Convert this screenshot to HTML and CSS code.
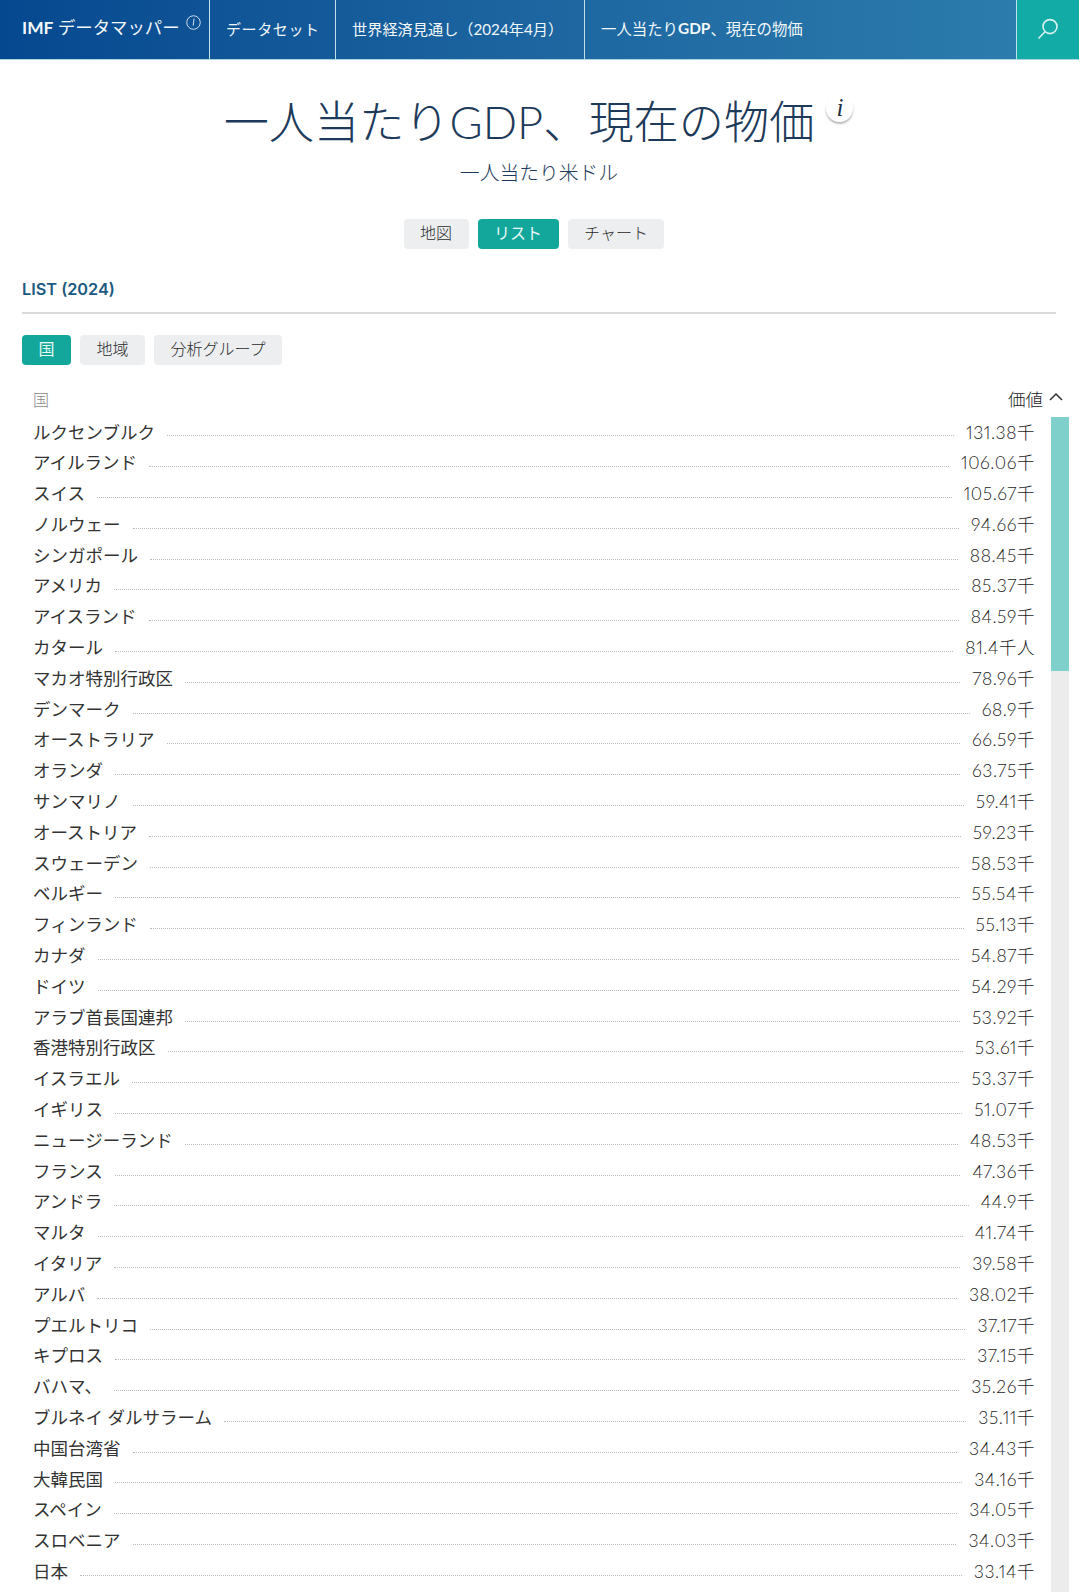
FILE: index.html
```html
<!DOCTYPE html>
<html lang="ja">
<head>
<meta charset="utf-8">
<title>一人当たりGDP、現在の物価</title>
<link rel="stylesheet" href="styles.css">
</head>
<body>
<header class="topbar">
  <div class="crumb crumb-brand"><span><b>IMF</b> データマッパー</span>
    <svg class="brand-info" viewBox="0 0 16 16"><circle cx="8" cy="8" r="7.2"/><path d="M8.6 3.8 7.6 11.4"/></svg>
  </div>
  <div class="crumb crumb-data">データセット</div>
  <div class="crumb crumb-weo">世界経済見通し（2024年4月）</div>
  <div class="crumb crumb-current">一人当たり<b>GDP</b>、現在の物価</div>
  <div class="search">
    <svg viewBox="0 0 22 22"><circle cx="13" cy="8.6" r="7"/><path d="M8 13.8 1.5 20.5"/></svg>
  </div>
</header>
<main>
  <section class="heading">
    <div class="title-line">
      <h1>一人当たりGDP、現在の物価</h1>
      <span class="title-info">i</span>
    </div>
    <p class="subtitle">一人当たり米ドル</p>
    <nav class="btn-group view-tabs">
      <span class="btn">地図</span><span class="btn active">リスト</span><span class="btn">チャート</span>
    </nav>
  </section>
  <h2 class="list-title">LIST (2024)</h2>
  <nav class="btn-group group-tabs">
    <span class="btn active">国</span><span class="btn">地域</span><span class="btn">分析グループ</span>
  </nav>
  <div class="table-head">
    <span class="head-name">国</span>
    <span class="head-value">価値
      <svg viewBox="0 0 14 8"><path d="M1 7 7 1l6 6"/></svg>
    </span>
  </div>
  <div class="list-wrap">
    <div class="rows">
      <div class="row"><span>ルクセンブルク</span><i></i><span class="val">131.38千</span></div>
      <div class="row"><span>アイルランド</span><i></i><span class="val">106.06千</span></div>
      <div class="row"><span>スイス</span><i></i><span class="val">105.67千</span></div>
      <div class="row"><span>ノルウェー</span><i></i><span class="val">94.66千</span></div>
      <div class="row"><span>シンガポール</span><i></i><span class="val">88.45千</span></div>
      <div class="row"><span>アメリカ</span><i></i><span class="val">85.37千</span></div>
      <div class="row"><span>アイスランド</span><i></i><span class="val">84.59千</span></div>
      <div class="row"><span>カタール</span><i></i><span class="val">81.4千人</span></div>
      <div class="row"><span>マカオ特別行政区</span><i></i><span class="val">78.96千</span></div>
      <div class="row"><span>デンマーク</span><i></i><span class="val">68.9千</span></div>
      <div class="row"><span>オーストラリア</span><i></i><span class="val">66.59千</span></div>
      <div class="row"><span>オランダ</span><i></i><span class="val">63.75千</span></div>
      <div class="row"><span>サンマリノ</span><i></i><span class="val">59.41千</span></div>
      <div class="row"><span>オーストリア</span><i></i><span class="val">59.23千</span></div>
      <div class="row"><span>スウェーデン</span><i></i><span class="val">58.53千</span></div>
      <div class="row"><span>ベルギー</span><i></i><span class="val">55.54千</span></div>
      <div class="row"><span>フィンランド</span><i></i><span class="val">55.13千</span></div>
      <div class="row"><span>カナダ</span><i></i><span class="val">54.87千</span></div>
      <div class="row"><span>ドイツ</span><i></i><span class="val">54.29千</span></div>
      <div class="row"><span>アラブ首長国連邦</span><i></i><span class="val">53.92千</span></div>
      <div class="row"><span>香港特別行政区</span><i></i><span class="val">53.61千</span></div>
      <div class="row"><span>イスラエル</span><i></i><span class="val">53.37千</span></div>
      <div class="row"><span>イギリス</span><i></i><span class="val">51.07千</span></div>
      <div class="row"><span>ニュージーランド</span><i></i><span class="val">48.53千</span></div>
      <div class="row"><span>フランス</span><i></i><span class="val">47.36千</span></div>
      <div class="row"><span>アンドラ</span><i></i><span class="val">44.9千</span></div>
      <div class="row"><span>マルタ</span><i></i><span class="val">41.74千</span></div>
      <div class="row"><span>イタリア</span><i></i><span class="val">39.58千</span></div>
      <div class="row"><span>アルバ</span><i></i><span class="val">38.02千</span></div>
      <div class="row"><span>プエルトリコ</span><i></i><span class="val">37.17千</span></div>
      <div class="row"><span>キプロス</span><i></i><span class="val">37.15千</span></div>
      <div class="row"><span>バハマ、</span><i></i><span class="val">35.26千</span></div>
      <div class="row"><span>ブルネイ ダルサラーム</span><i></i><span class="val">35.11千</span></div>
      <div class="row"><span>中国台湾省</span><i></i><span class="val">34.43千</span></div>
      <div class="row"><span>大韓民国</span><i></i><span class="val">34.16千</span></div>
      <div class="row"><span>スペイン</span><i></i><span class="val">34.05千</span></div>
      <div class="row"><span>スロベニア</span><i></i><span class="val">34.03千</span></div>
      <div class="row"><span>日本</span><i></i><span class="val">33.14千</span></div>
    </div>
    <div class="scrollbar"><div class="thumb"></div></div>
  </div>
</main>
</body>
</html>
```
FILE: styles.css
```css
* { box-sizing: border-box; }
html, body { margin: 0; height: 1592px; overflow: hidden; background: #fff; }
body {
  width: 1080px;
  font-family: Lato, "Noto Sans CJK JP", sans-serif;
  color: #333;
  display: flex;
  flex-direction: column;
}
.topbar {
  flex: none;
  display: flex;
  height: 60px;
  margin-right: 1px;
  color: #f2f7fa;
  background: linear-gradient(90deg, #06488f 0%, #1b639f 45%, #2e7fae 100%);
  border-bottom: 1px solid #a9d6e0;
}
.crumb {
  display: flex;
  align-items: center;
  padding-left: 16px;
  padding-bottom: 3px;
  border-right: 1px solid #bfe0ea;
  font-size: 15px;
  letter-spacing: .6px;
  white-space: nowrap;
}
.crumb b { font-weight: 700; }
.crumb-brand {
  width: 210px;
  padding-left: 22px;
  padding-bottom: 6px;
  font-size: 17.4px;
  letter-spacing: 0;
  position: relative;
}
.brand-info {
  width: 15px;
  height: 15px;
  margin: -9px 0 0 6px;
  fill: none;
  stroke: #f2f7fa;
  stroke-width: .9;
}
.crumb-data { width: 126px; }
.crumb-weo { width: 249px; font-size: 15.2px; letter-spacing: 0; }
.crumb-current { width: 432px; font-size: 15.4px; letter-spacing: 0; }
.search {
  flex: 1;
  display: flex;
  align-items: center;
  justify-content: center;
  background: #13aba5;
  padding-bottom: 1px;
}
.search svg {
  width: 22px;
  height: 22px;
  fill: none;
  stroke: #d9f3f1;
  stroke-width: 1.6;
}
main { flex: 1; display: flex; flex-direction: column; min-height: 0; }
.heading { display: flex; flex-direction: column; align-items: center; padding-top: 30px; }
.title-line { display: flex; align-items: flex-start; height: 62px; margin-right: 3px; }
h1 {
  margin: 1px 0 0;
  font-size: 45.2px;
  line-height: 62px;
  font-weight: 300;
  color: #1d3a5a;
  white-space: nowrap;
}
.title-info {
  width: 27px;
  height: 27px;
  margin: 5px 0 0 12px;
  border-radius: 50%;
  background: #fff;
  box-shadow: 0 2px 2px rgba(0,0,0,.28);
  font: italic 25px/25px "Liberation Serif", serif;
  color: #1f2f40;
  text-align: center;
}
.subtitle {
  margin: 6px 0 0;
  padding-right: 2px;
  font-size: 19.8px;
  line-height: 28px;
  font-weight: 300;
  color: #1d3a5a;
}
.btn-group { display: flex; gap: 9px; }
.view-tabs { margin-top: 33px; margin-right: 12px; }
.btn {
  height: 30px;
  padding: 0 16.5px;
  border-radius: 4px;
  background: #eceef0;
  color: #2b2b2b;
  font-size: 16px;
  line-height: 28px;
  font-weight: 300;
  white-space: nowrap;
}
.btn.active { background: #13a79b; color: #e8f8f6; font-weight: 400; }
.list-title {
  margin: 29px 0 0 22px;
  font-family: Inter, "Noto Sans CJK JP", sans-serif;
  font-size: 16.3px;
  line-height: 22px;
  font-weight: 600;
  color: #1c5a80;
}
.group-tabs {
  margin: 12px 24px 0 22px;
  padding-top: 21px;
  border-top: 2px solid #d9d9d9;
}
.table-head {
  display: flex;
  justify-content: space-between;
  align-items: center;
  height: 30px;
  margin-top: 18.5px;
  padding: 0 17px 0 33px;
}
.head-name { color: #8a8a8a; font-size: 16px; font-weight: 300; }
.head-value { display: flex; align-items: center; gap: 6px; font-size: 17.5px; font-weight: 300; color: #1c1c1c; }
.head-value svg { width: 14px; height: 8px; fill: none; stroke: #333; stroke-width: 1.5; margin-top: -3px; }
.list-wrap { flex: 1; min-height: 0; display: flex; align-items: stretch; padding-right: 11px; margin-top: 3px; }
.rows { flex: 1; padding: 1px 16px 0 33px; }
.row {
  display: flex;
  align-items: center;
  height: 30.8px;
  font-size: 17.5px;
  line-height: 30.8px;
  color: #333;
  white-space: nowrap;
}
.val {
  font-weight: 300;
  letter-spacing: .55px;
  font-variant-numeric: proportional-nums;
  color: #1c1c1c;
}
.row i {
  flex: 1;
  height: 1px;
  margin: 6px 12px 0;
  border-bottom: 1px dotted #bbb;
}
.scrollbar { flex: none; width: 18px; background: #ececec; }
.thumb { height: 254px; background: #7fcfcb; }
```
